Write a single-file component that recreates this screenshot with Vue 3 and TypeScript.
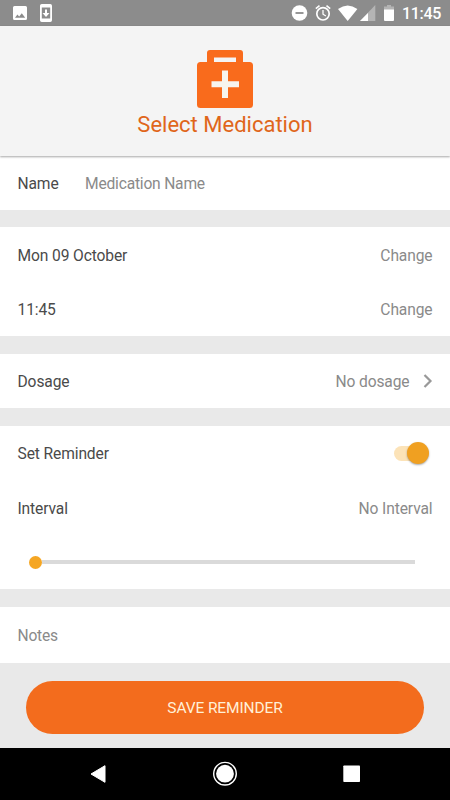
<script setup lang="ts">
import { ref } from 'vue'

interface ScheduleRow {
  label: string
  action: string
}

const schedule: ScheduleRow[] = [
  { label: 'Mon 09 October', action: 'Change' },
  { label: '11:45', action: 'Change' },
]
const name = ref('')
const notes = ref('')
const reminderOn = ref(true)
</script>

<template>
  <div class="screen">
    <header class="status">
      <svg class="status-left" width="60" height="26" viewBox="0 0 60 26">
        <path fill="#fff" fill-rule="evenodd" d="M14.500 6h11a1.500 1.500 0 0 1 1.500 1.500v11a1.500 1.500 0 0 1-1.500 1.500h-11a1.500 1.500 0 0 1-1.500-1.500v-11A1.500 1.500 0 0 1 14.500 6ZM15 17.800h10.200l-3.400-4.500-2.600 3.200-1.800-2Z" />
        <path fill="#fff" fill-rule="evenodd" d="M41.800 4h8.400a1.800 1.800 0 0 1 1.800 1.800v14.400a1.800 1.800 0 0 1-1.800 1.800h-8.400a1.800 1.800 0 0 1-1.800-1.800V5.800A1.800 1.800 0 0 1 41.800 4ZM41.800 7.500v11h8.400v-11Z" />
        <path fill="#fff" d="M45 9.500h2v3.500h2.500L46 17l-3.500-4H45Z" />
      </svg>
      <svg class="status-right" width="118" height="26" viewBox="284 0 118 26">
        <circle cx="299.500" cy="13" r="7.800" fill="#fff" />
        <path d="M295.500 13h8" stroke="#8c8c8c" stroke-width="1.800" />
        <g fill="none" stroke="#fff">
          <circle cx="323" cy="13.800" r="6.200" stroke-width="1.700" />
          <path d="M323 10v4.200l2.900 1.800" stroke-width="1.300" />
          <path d="M315.800 8.600l3.700-3M330.200 8.600l-3.700-3" stroke-width="1.600" />
        </g>
        <path d="M338 9q9.700-7 19.400 0L347.700 21Z" fill="#fff" />
        <path d="M375.300 5v16H360Z" fill="#b4b4b4" />
        <path d="M368 13v8h-8Z" fill="#fff" />
        <path d="M387 5h4v1.600h3V10h-10V6.600h3Z" fill="#b4b4b4" />
        <path d="M384 9.500h10V20a1 1 0 0 1-1 1h-8a1 1 0 0 1-1-1Z" fill="#fff" />
      </svg>
      <span class="clock">11:45</span>
    </header>

    <section class="hero">
      <svg width="56" height="58" viewBox="0 0 56 58">
        <path fill="#f96b1c" fill-rule="evenodd" d="M13 0h30a3 3 0 0 1 3 3v9h6.500A3.500 3.500 0 0 1 56 15.500v39a3.500 3.500 0 0 1-3.500 3.500h-49A3.500 3.500 0 0 1 0 54.500v-39A3.500 3.500 0 0 1 3.500 12H10V3a3 3 0 0 1 3-3ZM17 7.500v4.500h22V7.500Z" />
        <path fill="#f7f4ee" d="M25 20.500h6v10.700h11v6H31V48h-6V37.200H14.500v-6H25Z" />
      </svg>
      <h1>Select Medication</h1>
    </section>

    <main>
      <section class="card">
        <label class="row name-row">
          <span>Name</span>
          <input v-model="name" placeholder="Medication Name" />
        </label>
      </section>

      <section class="card dates">
        <div v-for="item in schedule" :key="item.label" class="row">
          <span>{{ item.label }}</span>
          <span class="muted">{{ item.action }}</span>
        </div>
      </section>

      <section class="card">
        <div class="row">
          <span>Dosage</span>
          <span class="muted dosage">
            No dosage
            <svg width="10" height="14" viewBox="0 0 10 14">
              <path d="M1.500 1l6 6-6 6" fill="none" stroke="#999" stroke-width="2.200" />
            </svg>
          </span>
        </div>
      </section>

      <section class="card">
        <div class="row">
          <span>Set Reminder</span>
          <button class="switch" :class="{ on: reminderOn }" aria-label="Set Reminder" @click="reminderOn = !reminderOn">
            <i></i>
          </button>
        </div>
        <div class="row">
          <span>Interval</span>
          <span class="muted">No Interval</span>
        </div>
        <div class="slider"><i class="thumb"></i><i class="track"></i></div>
      </section>

      <section class="card">
        <div class="row notes"><input v-model="notes" placeholder="Notes" /></div>
      </section>
    </main>

    <footer><button class="save">SAVE REMINDER</button></footer>

    <nav>
      <svg width="450" height="52" viewBox="0 0 450 52">
        <path d="M91 26l14-8.300v16.600Z" fill="#fff" stroke="#fff" stroke-width="1" stroke-linejoin="round" />
        <circle cx="225" cy="25.700" r="11.300" fill="none" stroke="#fff" stroke-width="1.400" />
        <circle cx="225" cy="25.700" r="8.900" fill="#fff" />
        <rect x="343.300" y="17.500" width="16.700" height="16.500" rx=".8" fill="#fff" />
      </svg>
    </nav>
  </div>
</template>

<style>
body {
  margin: 0;
}
</style>

<style scoped>
.screen {
  width: 450px;
  height: 800px;
  display: flex;
  flex-direction: column;
  background: #e9e9e9;
  color: #4a4a4a;
  font: 400 15.600px/20px Roboto, sans-serif;
  letter-spacing: -0.120px;
  overflow: hidden;
}
.status {
  height: 26px;
  flex: none;
  display: flex;
  background: #8c8c8c;
  color: #fff;
}
.status-right {
  margin-left: auto;
}
.clock {
  width: 48px;
  font-size: 16px;
  letter-spacing: -0.300px;
  font-weight: 500;
  line-height: 28px;
}
.hero {
  height: 130px;
  flex: none;
  box-sizing: border-box;
  padding-top: 24px;
  display: flex;
  flex-direction: column;
  align-items: center;
  background: #f4f4f4;
  box-shadow: 0 1px 2px rgba(0, 0, 0, 0.35);
  position: relative;
}
.hero svg {
  display: block;
}
h1 {
  margin: 2px 0 0;
  font-size: 22px;
  line-height: 30px;
  letter-spacing: 0;
  font-weight: 400;
  color: #e0661a;
}
main {
  height: 507px;
  flex: none;
  display: flex;
  flex-direction: column;
  gap: 17.500px;
}
.card {
  background: #fff;
}
.card:first-child {
  height: 53.500px;
}
.row {
  height: 54.500px;
  box-sizing: border-box;
  padding: 3px 17.500px 0;
  display: flex;
  align-items: center;
  justify-content: space-between;
}
.name-row {
  justify-content: flex-start;
  height: 54px;
  padding-top: 1px;
}
.name-row span {
  width: 67.500px;
}
input {
  border: 0;
  outline: 0;
  padding: 0;
  background: none;
  font: inherit;
  color: inherit;
  letter-spacing: -0.200px;
}
input::placeholder,
.muted {
  color: #8a8a8a;
  opacity: 1;
}
.dosage {
  display: flex;
  align-items: center;
  gap: 13px;
}
.dosage svg {
  margin-top: -3px;
}
.switch {
  width: 38.500px;
  height: 24px;
  margin-top: -2px;
  border: 0;
  padding: 0;
  display: flex;
  align-items: center;
  position: relative;
  background: none;
}
.switch::before {
  content: '';
  position: absolute;
  left: 0;
  top: 4.500px;
  width: 32px;
  height: 15px;
  border-radius: 8px;
  background: #fce3b8;
}
.switch i {
  position: relative;
  width: 22px;
  height: 22px;
  border-radius: 50%;
  background: #999;
  box-shadow: 0 1px 2px rgba(0, 0, 0, 0.35);
}
.switch.on i {
  margin-left: 12.500px;
  background: #f0a021;
}
.slider {
  height: 54.500px;
  padding: 1px 35px 0 28.500px;
  box-sizing: border-box;
  display: flex;
  align-items: center;
}
.thumb {
  width: 13px;
  height: 13px;
  border-radius: 50%;
  background: #f5a623;
}
.track {
  flex: 1;
  height: 4px;
  background: #dadada;
}
.notes {
  height: 56px;
}
footer {
  height: 85px;
  flex: none;
  box-sizing: border-box;
  padding: 18px 26px 14.500px;
}
.save {
  width: 100%;
  height: 52.500px;
  display: block;
  border: 0;
  border-radius: 26.500px;
  background: #f36c1d;
  color: #fff0d8;
  padding: 2px 0 0;
  font: 400 15.500px/20px Roboto, sans-serif;
  letter-spacing: -0.120px;
}
nav {
  height: 52px;
  background: #000;
}
nav svg {
  display: block;
}
</style>
